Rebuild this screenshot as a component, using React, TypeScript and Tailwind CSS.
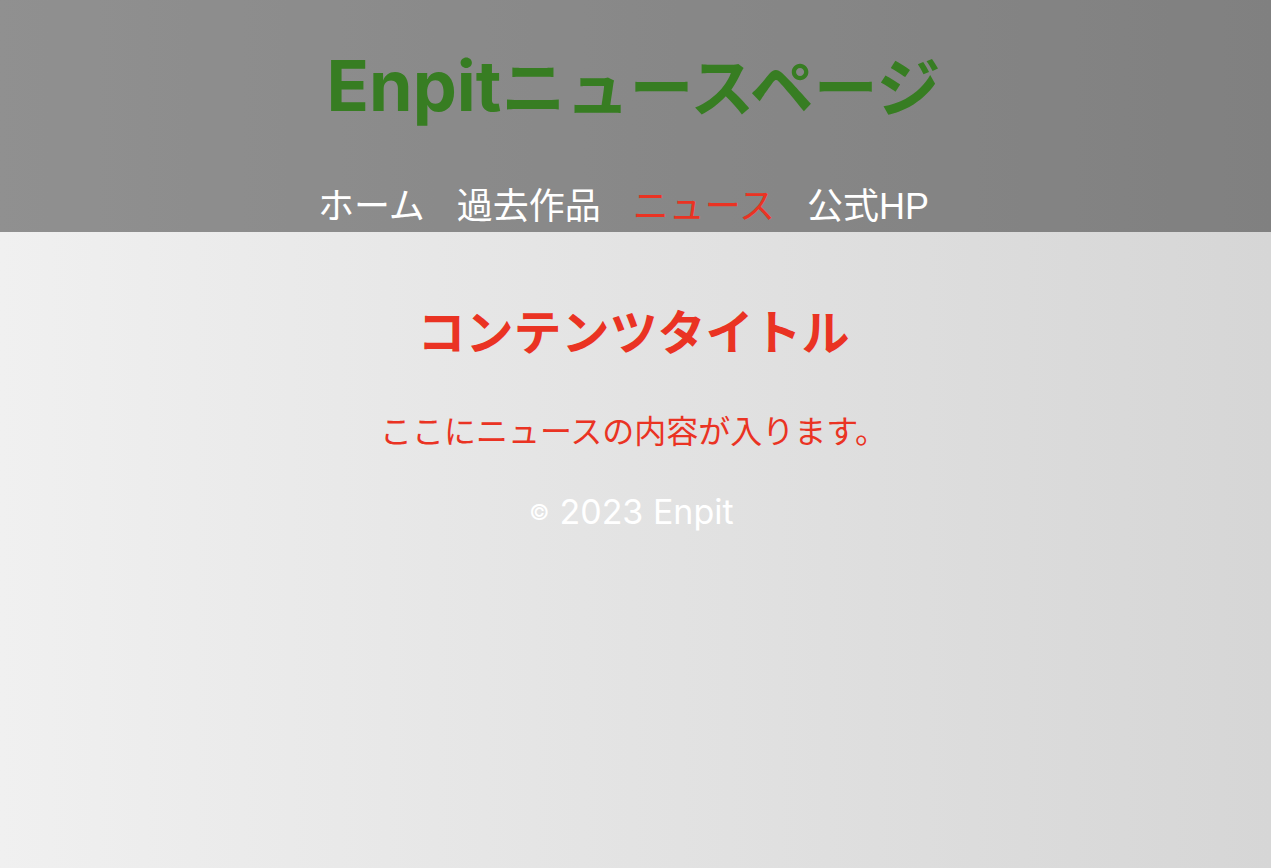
const links = [
  { label: "ホーム", href: "#home", active: false },
  { label: "過去作品", href: "#works", active: false },
  { label: "ニュース", href: "#news", active: true },
  { label: "公式HP", href: "#official", active: false },
];

export default function App() {
  return (
    <div className="min-h-screen bg-linear-to-r from-[#f0f0f0] to-[#d6d6d6] text-center font-['Noto_Sans_CJK_JP',sans-serif]">
      <header className="bg-black/40 pt-[35px] pb-px">
        <h1 className="pr-1 text-[64px] leading-[96px] font-bold text-[#377d22]">
          <span className="font-['Inter',sans-serif] text-[70px]">Enpit</span>ニュースページ
        </h1>
        <nav className="mt-[49px]">
          <ul className="flex justify-center gap-8 pr-6 font-['Liberation_Sans','Noto_Sans_CJK_JP',sans-serif] text-4xl leading-[48px]">
            {links.map((link) => (
              <li key={link.href}>
                <a href={link.href} className={link.active ? "text-[#ea3323]" : "text-white"}>
                  {link.label}
                </a>
              </li>
            ))}
          </ul>
        </nav>
      </header>
      <main className="pt-[61px] pr-1 text-[#ea3323]">
        <h2 className="text-5xl leading-[72px] font-bold">コンテンツタイトル</h2>
        <p className="mt-10 text-[32px] leading-[48px]">ここにニュースの内容が入ります。</p>
      </main>
      <footer className="mt-[35px] pr-2 font-['Inter',sans-serif] text-[34px] leading-[48px] text-white">
        <p className="flex items-center justify-center gap-2.5">
          <span className="text-[22px]">©</span>
          <span>2023 Enpit</span>
        </p>
      </footer>
    </div>
  );
}
